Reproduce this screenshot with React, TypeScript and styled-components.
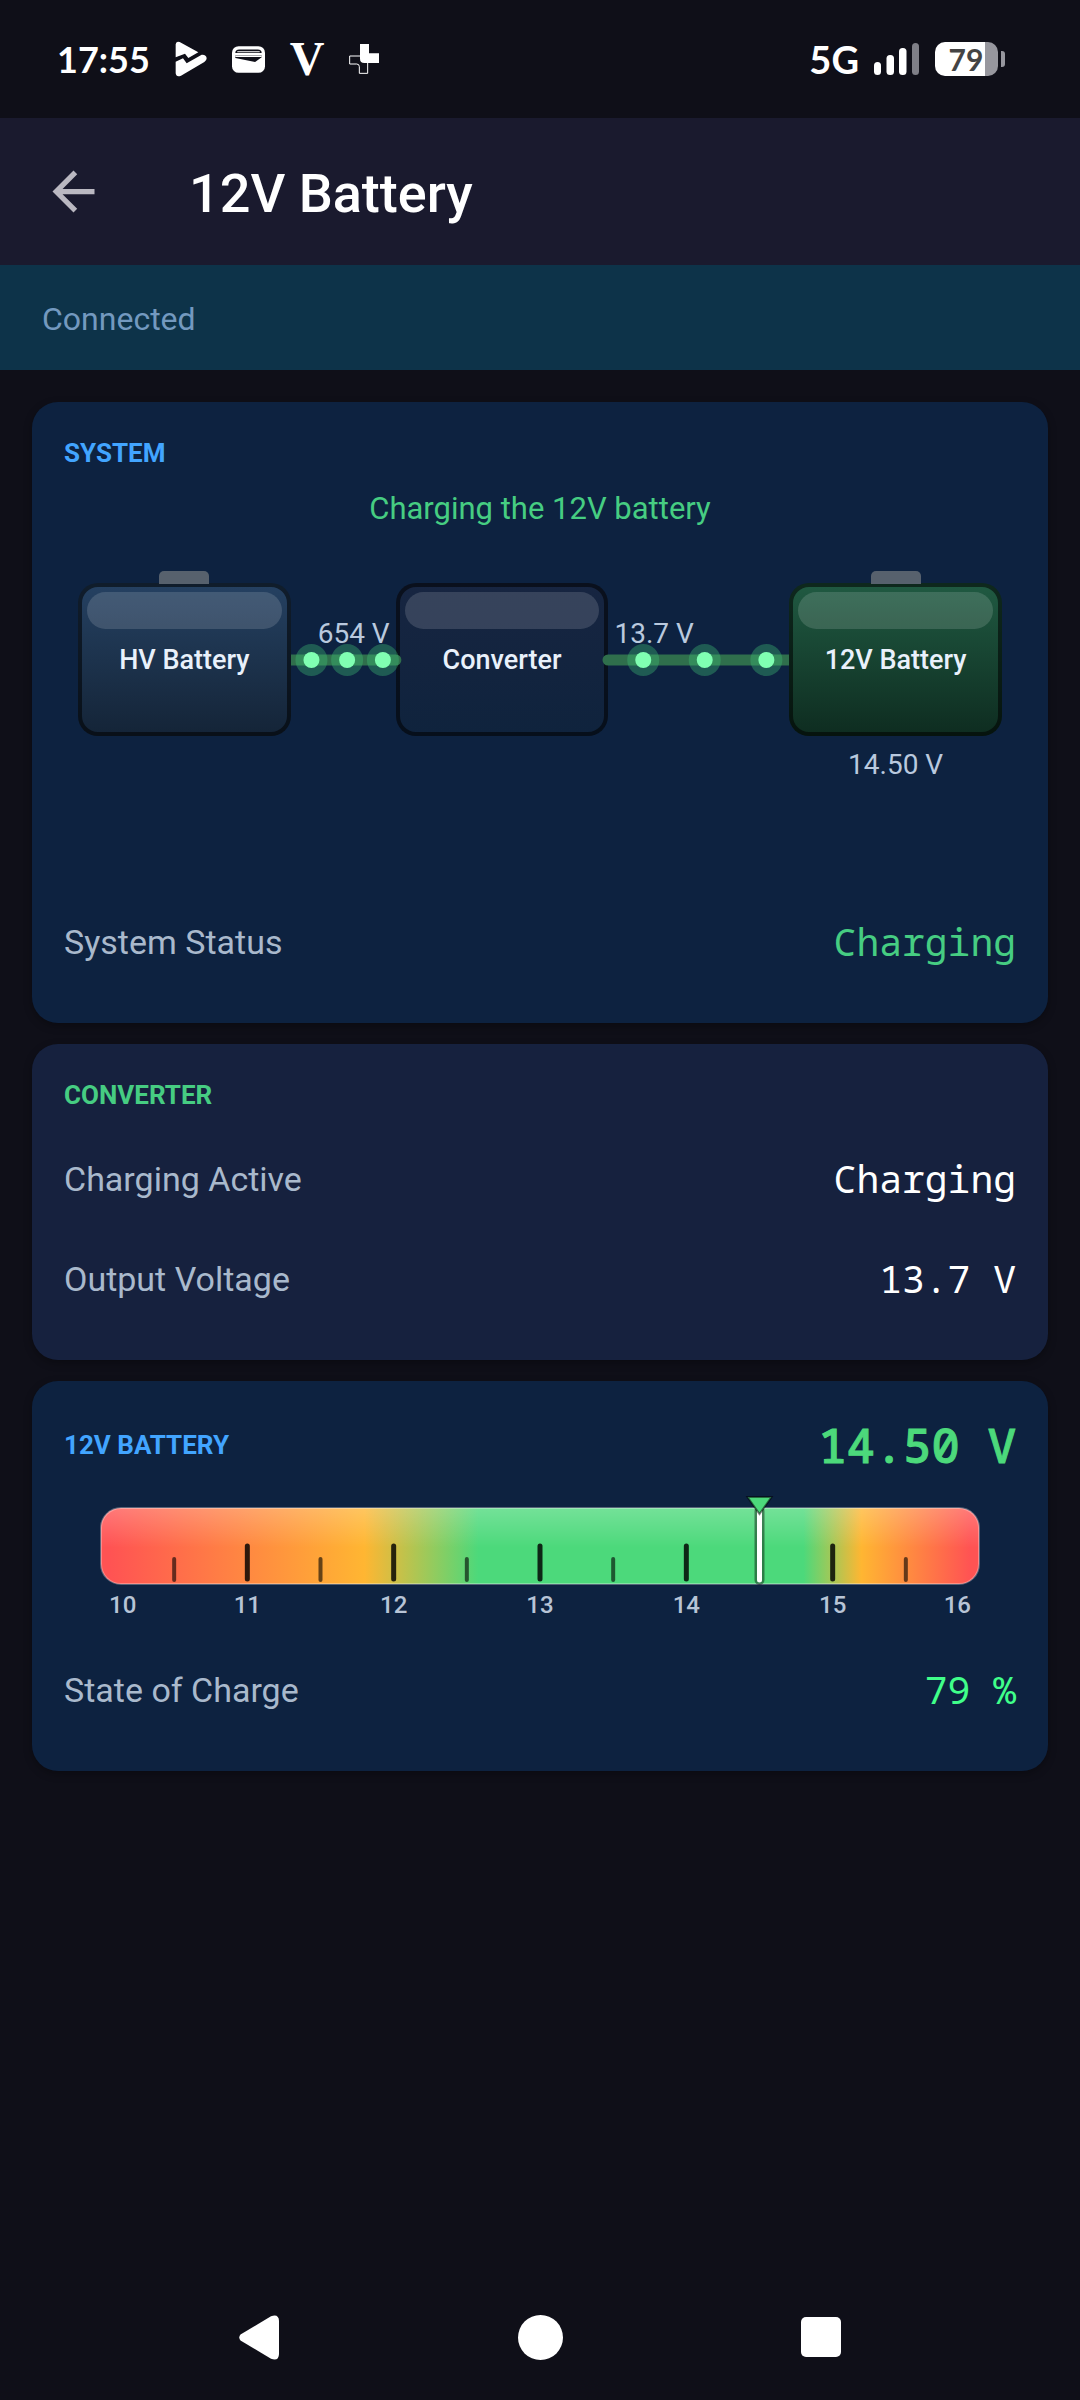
import React from "react";
import styled, { createGlobalStyle } from "styled-components";

const colors = {
  page: "#0f0f18",
  bar: "#1a1a2e",
  connected: "#0d3349",
  navy: "#0d2240",
  indigo: "#16213e",
  blue: "#42a5ff",
  green: "#46cd82",
  gauge: "#4cd97b",
  lime: "#40ff8a",
  label: "#a9b9cc",
  soft: "#b9c9de",
};

const sans = `Roboto, "Noto Sans", sans-serif`;
const mono = `"Droid Sans Mono", "Noto Sans Mono", "DejaVu Sans Mono", monospace`;

const GlobalStyle = createGlobalStyle`
  *, *::before, *::after { box-sizing: border-box; }
  body {
    margin: 0;
    background: ${colors.page};
    color: #fff;
    font-family: ${sans};
  }
  h1, h2, p, dl, dd { margin: 0; }
`;

const Screen = styled.div`
  display: flex;
  flex-direction: column;
  min-height: 100vh;
  background: ${colors.page};
`;

const StatusBar = styled.div`
  display: flex;
  align-items: center;
  justify-content: space-between;
  height: 118px;
  padding: 0 75px 0 57px;
  font-family: Lato, ${sans};
  font-weight: 700;
`;

const StatusGroup = styled.div<{ $gap: number }>`
  display: flex;
  align-items: center;
  gap: ${(p) => p.$gap}px;
`;

const Clock = styled.time`
  font-size: 36px;
  line-height: 44px;
`;

const Letter = styled.span`
  font: 700 48px/48px "Liberation Serif", serif;
`;

const Network = styled.span`
  font-size: 38px;
  line-height: 44px;
`;

const BatteryBadge = styled.div`
  display: flex;
  align-items: center;
  gap: 3px;
  &::after {
    content: "";
    width: 4px;
    height: 16px;
    border-radius: 0 3px 3px 0;
    background: #97979e;
  }
`;

const BatteryLevel = styled.span<{ $level: number }>`
  width: 63px;
  height: 34px;
  padding-right: 1px;
  border-radius: 10px;
  background: linear-gradient(to right, #fff ${(p) => p.$level}%, #97979e ${(p) => p.$level}%);
  color: #444;
  font-size: 30px;
  line-height: 34px;
  text-align: center;
`;

const AppBar = styled.header`
  display: flex;
  align-items: center;
  gap: 84px;
  height: 147px;
  padding: 0 42px;
  background: ${colors.bar};
`;

const IconButton = styled.button`
  display: flex;
  align-items: center;
  justify-content: center;
  min-width: 63px;
  height: 63px;
  padding: 0;
  border: 0;
  background: none;
  color: inherit;
`;

const BackButton = styled(IconButton)`
  color: #bab8c1;
`;

const Title = styled.h1`
  padding-top: 4px;
  font-size: 54px;
  font-weight: 500;
  line-height: 64px;
`;

const Connection = styled.p`
  padding: 33px 42px 30px;
  background: ${colors.connected};
  color: #7399bf;
  font-size: 32px;
  line-height: 42px;
`;

const Cards = styled.main`
  display: flex;
  flex-direction: column;
  gap: 21px;
  padding: 32px;
`;

const Card = styled.section<{ $tone: string }>`
  padding: 32px;
  border-radius: 26px;
  background: ${(p) => p.$tone};
  box-shadow: 0 3px 8px rgba(0, 0, 0, 0.3);
`;

const CardTitle = styled.h2<{ $color: string }>`
  color: ${(p) => p.$color};
  font-size: 26px;
  font-weight: 700;
  line-height: 38px;
`;

const CardHead = styled.div`
  display: flex;
  align-items: center;
  justify-content: space-between;
`;

const Reading = styled.strong`
  color: ${colors.gauge};
  font-family: ${mono};
  font-size: 47px;
  font-weight: 500;
  line-height: 64px;
  -webkit-text-stroke: 1px currentColor;
`;

const Summary = styled.p`
  margin-top: 15px;
  color: ${colors.green};
  font-size: 31px;
  line-height: 44px;
  text-align: center;
`;

const Rows = styled.dl<{ $top?: number }>`
  padding-top: ${(p) => p.$top ?? 0}px;
`;

const Row = styled.div`
  display: flex;
  align-items: center;
  justify-content: space-between;
  height: 100px;
`;

const RowLabel = styled.dt`
  padding-top: 2px;
  color: ${colors.label};
  font-size: 34px;
  line-height: 44px;
`;

const RowValue = styled.dd<{ $color?: string }>`
  color: ${(p) => p.$color ?? "#fff"};
  font-family: ${mono};
  font-size: 38px;
  line-height: 44px;
`;

const Diagram = styled.div`
  display: flex;
  align-items: flex-start;
  padding: 52px 14px 96px;
`;

const NodeColumn = styled.div<{ $raised?: boolean }>`
  position: relative;
  z-index: ${(p) => (p.$raised ? 2 : 0)};
  flex: 213 1 0;
`;

const NodeBox = styled.div<{ $from: string; $to: string; $terminal?: boolean }>`
  position: relative;
  display: flex;
  align-items: center;
  justify-content: center;
  height: 153px;
  border: 4px solid rgba(0, 0, 0, 0.55);
  border-radius: 20px;
  background: linear-gradient(${(p) => p.$from}, ${(p) => p.$to}) border-box, ${colors.navy};
  color: #e9f1fb;
  font-size: 27px;
  font-weight: 500;

  /* gloss across the upper third */
  &::before {
    content: "";
    position: absolute;
    top: 5px;
    left: 5px;
    right: 5px;
    height: 37px;
    border-radius: 19px;
    background: rgba(255, 255, 255, 0.14);
  }

  /* battery terminal */
  &::after {
    content: "";
    display: ${(p) => (p.$terminal ? "block" : "none")};
    position: absolute;
    top: -16px;
    left: calc(50% - 25px);
    width: 50px;
    height: 13px;
    border-radius: 5px 5px 0 0;
    background: #57616d;
  }
`;

const NodeReading = styled.div`
  margin-top: 11px;
  color: ${colors.soft};
  font-size: 28px;
  line-height: 36px;
  text-align: center;
`;

const LinkColumn = styled.div<{ $grow: number; $align: "start" | "end" }>`
  position: relative;
  z-index: 1;
  flex: ${(p) => p.$grow} 1 0;
  height: 153px;
  padding-top: 33px;
  text-align: ${(p) => p.$align};
`;

const LinkReading = styled.div`
  margin: 0 6px;
  color: ${colors.soft};
  font-size: 28px;
  line-height: 36px;
  white-space: nowrap;
`;

const Wire = styled.svg`
  position: absolute;
  top: 61px;
  left: 0;
  width: 100%;
  height: 32px;
  overflow: visible;
`;

const GaugeFrame = styled.div`
  padding: 20px 37px 15px;
`;

const GaugeDrawing = styled.svg`
  display: block;
  width: 100%;
  height: 126px;
  overflow: visible;
  font: 500 24px ${sans};
`;

const NavBar = styled.nav`
  display: grid;
  grid-template-columns: repeat(3, 1fr);
  width: 100%;
  max-width: 843px;
  height: 126px;
  margin: auto auto 0;
  align-items: center;
  justify-items: center;
`;

type NodeProps = { name: string; from: string; to: string; battery?: boolean; reading?: string };

const SystemNode = ({ name, from, to, battery, reading }: NodeProps) => (
  <NodeColumn $raised={battery}>
    <NodeBox $from={from} $to={to} $terminal={battery}>
      {name}
    </NodeBox>
    {reading && <NodeReading>{reading}</NodeReading>}
  </NodeColumn>
);

const pulses = ["19.5%", "53.5%", "87.6%"];

type LinkProps = { volts: string; grow: number; align: "start" | "end" };

const PowerLink = ({ volts, grow, align }: LinkProps) => (
  <LinkColumn $grow={grow} $align={align}>
    <LinkReading>{volts}</LinkReading>
    <Wire aria-hidden="true">
      <line x1="0" x2="100%" y1="16" y2="16" stroke="#2f6f4c" strokeWidth="11" strokeLinecap="round" />
      {pulses.map((x) => (
        <g key={x}>
          <circle cx={x} cy="16" r="16" fill="#3fbf74" fillOpacity="0.37" />
          <circle cx={x} cy="16" r="8" fill="#80ffb2" />
        </g>
      ))}
    </Wire>
  </LinkColumn>
);

const MIN = 10;
const MAX = 16;
const at = (volts: number) => `${((volts - MIN) / (MAX - MIN)) * 100}%`;
const majors = [11, 12, 13, 14, 15];
const minors = [10.5, 11.5, 12.5, 13.5, 15.5];

const VoltageGauge = ({ volts }: { volts: number }) => (
  <GaugeFrame>
    <GaugeDrawing role="img" aria-label="Battery voltage gauge">
      <defs>
        <linearGradient id="zones">
          <stop offset="1%" stopColor="#ff5353" />
          <stop offset="30%" stopColor="#ffb632" />
          <stop offset="43%" stopColor={colors.gauge} />
          <stop offset="80%" stopColor={colors.gauge} />
          <stop offset="86.6%" stopColor="#ffb632" />
          <stop offset="99%" stopColor="#ff5353" />
        </linearGradient>
        <linearGradient id="gloss" x2="0" y2="1">
          <stop offset="0" stopColor="#fff" stopOpacity="0.22" />
          <stop offset="0.52" stopColor="#fff" stopOpacity="0" />
        </linearGradient>
      </defs>
      <rect y="11" width="100%" height="76" rx="20" fill="url(#zones)" />
      <rect y="11" width="100%" height="76" rx="20" fill="url(#gloss)" stroke="#fff" strokeOpacity="0.3" strokeWidth="2" />
      {minors.map((v) => (
        <line key={v} x1={at(v)} x2={at(v)} y1="62" y2="83" stroke="#000" strokeOpacity="0.6" strokeWidth="4" strokeLinecap="round" />
      ))}
      {majors.map((v) => (
        <line key={v} x1={at(v)} x2={at(v)} y1="49" y2="82" stroke="#000" strokeOpacity="0.82" strokeWidth="5" strokeLinecap="round" />
      ))}
      <line x1={at(volts)} x2={at(volts)} y1="14" y2="83" stroke="#000" strokeOpacity="0.42" strokeWidth="10" strokeLinecap="round" />
      <line x1={at(volts)} x2={at(volts)} y1="14" y2="83" stroke="#fff" strokeWidth="5" strokeLinecap="round" />
      <svg x={at(volts)} overflow="visible">
        <path d="M-12 0H12L0 17Z" fill={colors.gauge} stroke="#000" strokeOpacity="0.5" strokeWidth="2" />
      </svg>
      <g fill="#b7c4d6" textAnchor="middle">
        <text x={at(MIN)} dx="8" y="116" textAnchor="start">{MIN}</text>
        {majors.map((v) => (
          <text key={v} x={at(v)} y="116">{v}</text>
        ))}
        <text x={at(MAX)} dx="-8" y="116" textAnchor="end">{MAX}</text>
      </g>
    </GaugeDrawing>
  </GaugeFrame>
);

const StreamIcon = () => (
  <svg width="32" height="36" viewBox="0 0 96 108" fill="#fff" aria-hidden="true">
    <path d="M2 10Q3-1 14 3L70 34 40 51 30 38 2 49Z" />
    <path d="M2 62 24 52 35 67 80 41Q94 40 95 52 95 59 88 63L18 104Q4 110 2 97Z" />
  </svg>
);

const WalletIcon = () => (
  <svg width="33" height="27" viewBox="0 0 100 81" aria-hidden="true">
    <rect width="100" height="81" rx="20" fill="#fff" />
    <path d="M10 21Q10 10 22 10H78Q90 10 90 21Z" fill={colors.page} />
    <path d="M16 17H84" stroke="#fff" strokeWidth="3" />
    <path d="M10 28H90V34L70 48 10 36Z" fill={colors.page} />
    <path d="M10 31H90" stroke="#fff" strokeWidth="4" />
  </svg>
);

const CrossIcon = () => (
  <svg width="30" height="30" viewBox="0 0 90 90" aria-hidden="true">
    <path d="M33 0H60V28H90V57H46Q33 57 33 44Z" fill="#fff" />
    <path d="M33 36H2V60H23Q31 60 31 68V88H56V57" fill="none" stroke="#fff" strokeWidth="3" />
  </svg>
);

const SignalIcon = () => (
  <svg width="46" height="34" viewBox="0 0 46 34" fill="#fff" aria-hidden="true">
    <rect y="20" width="7" height="13" rx="3.5" />
    <rect x="12.5" y="13" width="7.5" height="20" rx="3.5" />
    <rect x="25" y="6" width="7.5" height="27" rx="3.5" />
    <rect x="38" y="1" width="7" height="32" rx="3.5" fill="#7f7f87" />
  </svg>
);

export default function App() {
  return (
    <Screen>
      <GlobalStyle />
      <StatusBar>
        <StatusGroup $gap={25}>
          <Clock>17:55</Clock>
          <StreamIcon />
          <WalletIcon />
          <Letter>V</Letter>
          <CrossIcon />
        </StatusGroup>
        <StatusGroup $gap={15}>
          <Network>5G</Network>
          <SignalIcon />
          <BatteryBadge>
            <BatteryLevel $level={79}>79</BatteryLevel>
          </BatteryBadge>
        </StatusGroup>
      </StatusBar>

      <AppBar>
        <BackButton type="button" aria-label="Back">
          <svg width="63" height="63" viewBox="0 0 24 24" fill="currentColor" aria-hidden="true">
            <path d="M20 11H7.83l5.59-5.59L12 4l-8 8 8 8 1.41-1.41L7.83 13H20z" />
          </svg>
        </BackButton>
        <Title>12V Battery</Title>
      </AppBar>
      <Connection>Connected</Connection>

      <Cards>
        <Card $tone={colors.navy}>
          <CardTitle $color={colors.blue}>SYSTEM</CardTitle>
          <Summary>Charging the 12V battery</Summary>
          <Diagram>
            <SystemNode name="HV Battery" from="#254162" to="#142437" battery />
            <PowerLink volts="654 V" grow={105} align="end" />
            <SystemNode name="Converter" from="#172541" to="#0f233d" />
            <PowerLink volts="13.7 V" grow={181} align="start" />
            <SystemNode name="12V Battery" from="#205a42" to="#0e2c20" battery reading="14.50 V" />
          </Diagram>
          <Rows $top={12}>
            <Row>
              <RowLabel>System Status</RowLabel>
              <RowValue $color={colors.green}>Charging</RowValue>
            </Row>
          </Rows>
        </Card>

        <Card $tone={colors.indigo}>
          <CardTitle $color={colors.green}>CONVERTER</CardTitle>
          <Rows $top={14}>
            <Row>
              <RowLabel>Charging Active</RowLabel>
              <RowValue>Charging</RowValue>
            </Row>
            <Row>
              <RowLabel>Output Voltage</RowLabel>
              <RowValue>13.7 V</RowValue>
            </Row>
          </Rows>
        </Card>

        <Card $tone={colors.navy}>
          <CardHead>
            <CardTitle $color={colors.blue}>12V BATTERY</CardTitle>
            <Reading>14.50 V</Reading>
          </CardHead>
          <VoltageGauge volts={14.5} />
          <Rows $top={1}>
            <Row>
              <RowLabel>State of Charge</RowLabel>
              <RowValue $color={colors.lime}>79 %</RowValue>
            </Row>
          </Rows>
        </Card>
      </Cards>

      <NavBar aria-label="System navigation">
        <IconButton type="button" aria-label="Back">
          <svg width="40" height="45" viewBox="0 0 40 45" fill="#fff" aria-hidden="true">
            <path d="M1.5 19.5 32 1.2Q39.8-1.5 40 6V39Q39.8 46.5 32 43.8L1.5 25.5Q-1 22.5 1.5 19.5Z" />
          </svg>
        </IconButton>
        <IconButton type="button" aria-label="Home">
          <svg width="45" height="45" viewBox="0 0 45 45" fill="#fff" aria-hidden="true">
            <circle cx="22.5" cy="22.5" r="22.5" />
          </svg>
        </IconButton>
        <IconButton type="button" aria-label="Recent apps">
          <svg width="40" height="40" viewBox="0 0 40 40" fill="#fff" aria-hidden="true">
            <rect width="40" height="40" rx="5" />
          </svg>
        </IconButton>
      </NavBar>
    </Screen>
  );
}
